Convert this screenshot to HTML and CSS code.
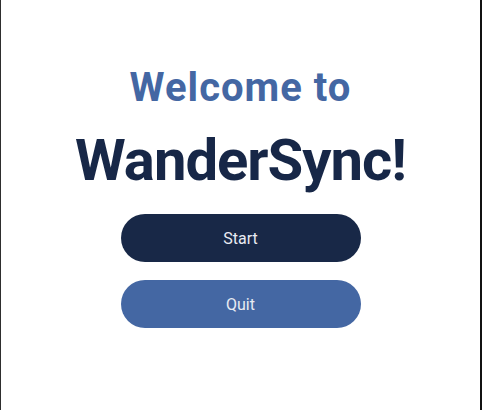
FILE: index.html
```html
<!DOCTYPE html>
<html>
<head>
<meta charset="utf-8">
<link rel="stylesheet" href="styles.css">
</head>
<body>
<main class="screen">
  <h2 class="welcome">Welcome to</h2>
  <h1 class="brand">WanderSync!</h1>
  <div class="actions">
    <button class="btn btn-start">Start</button>
    <button class="btn btn-quit">Quit</button>
  </div>
</main>
</body>
</html>
```
FILE: styles.css
```css
html, body {
  margin: 0;
  padding: 0;
  background: #ffffff;
}
.screen {
  box-sizing: border-box;
  width: 482px;
  height: 410px;
  border-left: 1px solid #2e2e2e;
  border-right: 2px solid #111111;
  display: flex;
  flex-direction: column;
  align-items: center;
  padding-top: 64px;
  font-family: Roboto, "Liberation Sans", sans-serif;
}
.welcome {
  margin: 0;
  font-size: 40px;
  line-height: 48px;
  font-weight: 700;
  letter-spacing: 1px;
  color: #4467a3;
}
.brand {
  margin: 14px 0 0;
  font-size: 58px;
  line-height: 68px;
  font-weight: 700;
  letter-spacing: -1px;
  color: #172747;
}
.actions {
  margin-top: 20px;
  display: flex;
  flex-direction: column;
  gap: 18px;
}
.btn {
  width: 240px;
  height: 48px;
  border: none;
  border-radius: 24px;
  font-family: Roboto, "Liberation Sans", sans-serif;
  font-size: 16px;
  color: #e8ebf2;
  padding: 0;
}
.btn-start {
  background: #182847;
}
.btn-quit {
  background: #4467a3;
}
```
